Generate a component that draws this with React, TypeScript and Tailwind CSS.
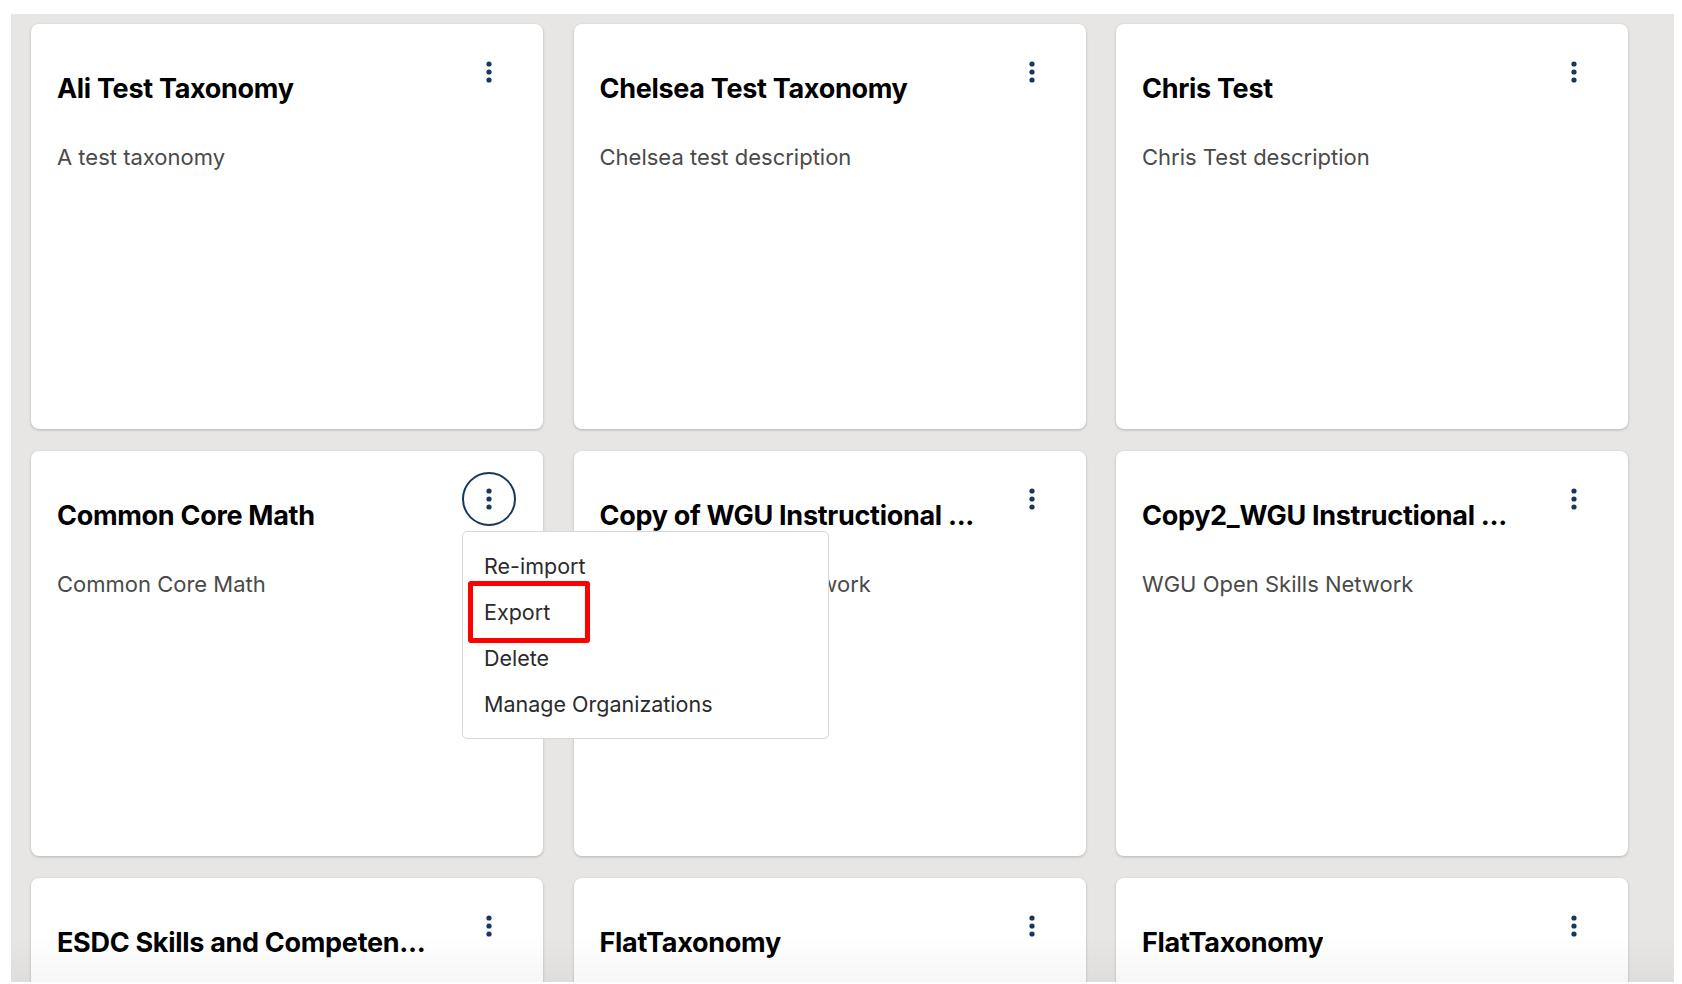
import React from 'react';

interface Taxonomy {
  title: string;
  description?: string;
}

const taxonomies: Taxonomy[] = [
  { title: 'Ali Test Taxonomy', description: 'A test taxonomy' },
  { title: 'Chelsea Test Taxonomy', description: 'Chelsea test description' },
  { title: 'Chris Test', description: 'Chris Test description' },
  { title: 'Common Core Math', description: 'Common Core Math' },
  { title: 'Copy of WGU Instructional ...', description: 'WGU Open Skills Network' },
  { title: 'Copy2_WGU Instructional ...', description: 'WGU Open Skills Network' },
  // last row is cut off by the viewport, descriptions never show
  { title: 'ESDC Skills and Competen...' },
  { title: 'FlatTaxonomy' },
  { title: 'FlatTaxonomy' },
];

const menuItems = ['Re-import', 'Export', 'Delete', 'Manage Organizations'];

const font = { fontFamily: 'Inter, "Liberation Sans", sans-serif' };

const Kebab = () => (
  <svg width="6" height="22" viewBox="0 0 6 22" fill="#17375e">
    <circle cx="3" cy="3" r="2.6" />
    <circle cx="3" cy="11" r="2.6" />
    <circle cx="3" cy="19" r="2.6" />
  </svg>
);

const ActionMenu = () => (
  <div className="absolute left-[431px] top-[80px] z-20 w-[367px] rounded-[5px] border border-[#d8d8d8] bg-white pt-[11px] pb-[11px]">
    {menuItems.map((item) => (
      <div key={item} className="flex h-[46px] items-center px-[21px] text-[21.5px] text-[#2b2b2b]">
        {item}
      </div>
    ))}
    <div className="pointer-events-none absolute left-[5px] top-[49px] h-[62px] w-[122px] rounded-[3px] border-[5px] border-[#ff0000]" />
  </div>
);

const TaxonomyCard: React.FC<{ item: Taxonomy; open?: boolean }> = ({ item, open = false }) => (
  <div className="relative h-[405px] rounded-[8px] bg-white pl-[26px] pr-[27px] pt-[21px] shadow-[0_1px_3px_rgba(0,0,0,0.22)]">
    <div className="flex items-start justify-between">
      <h2 className="mt-[27px] max-w-[400px] truncate whitespace-nowrap text-[27px] font-bold leading-[34px] tracking-[-0.3px] text-black">
        {item.title}
      </h2>
      <button
        className={`flex h-[54px] w-[54px] shrink-0 items-center justify-center rounded-full ${
          open ? 'border-2 border-[#17375e]' : 'border-2 border-transparent'
        }`}
      >
        <Kebab />
      </button>
    </div>
    {item.description && (
      <p className="mt-[37px] text-[22px] leading-[28px] text-[#4a4a4a]">{item.description}</p>
    )}
    {open && <ActionMenu />}
  </div>
);

export default function App() {
  return (
    <div className="h-[984px] w-[1682px] overflow-hidden bg-white" style={font}>
      <div className="relative ml-[11px] mt-[14px] h-[968px] w-[1663px] overflow-hidden bg-[#e7e6e4] pl-[20px] pt-[10px]">
        <div className="grid w-[1597px] grid-cols-3 gap-x-[30.5px] gap-y-[22px]">
          {taxonomies.map((t, i) => (
            <TaxonomyCard key={i} item={t} open={i === 3} />
          ))}
        </div>
        <div className="pointer-events-none absolute bottom-0 left-0 h-[46px] w-full bg-gradient-to-b from-transparent to-[rgba(0,0,0,0.035)]" />
      </div>
    </div>
  );
}
